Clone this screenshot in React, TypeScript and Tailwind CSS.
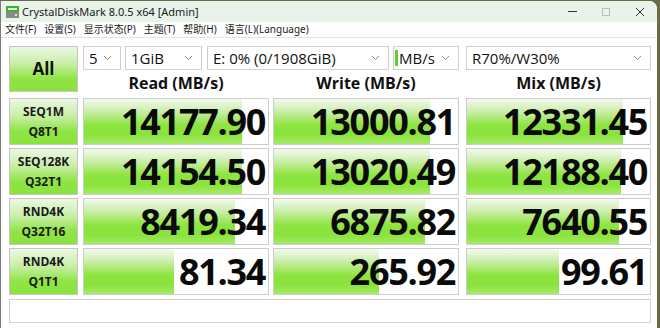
import React from "react";

const barBg =
  "bg-[linear-gradient(to_bottom,#f4f9f0_0%,#c9eea8_28%,#8ee440_58%,#8ae33c_80%,#a6ea68_100%)]";
const btnBg =
  "bg-[linear-gradient(to_bottom,#ecf8e3_0%,#c8eea6_38%,#90e446_72%,#8ae33d_100%)]";

function Chevron() {
  return (
    <svg width="9" height="6" viewBox="0 0 9 6" className="shrink-0">
      <path d="M1 1 L4.5 4.5 L8 1" fill="none" stroke="#8a8a8a" strokeWidth="1" />
    </svg>
  );
}

function Select({ w, text, accent }: { w: string; text: string; accent?: boolean }) {
  return (
    <div
      className={`${w} h-[24px] border border-[#cfcfcf] bg-white flex items-center pl-[4px] pr-[8px] relative`}
    >
      {accent && <div className="absolute left-[1px] top-[3px] w-[3px] h-[16px] bg-[#5fcf2a]" />}
      <span className="flex-1 text-[15px] leading-[20px] text-[#111] whitespace-nowrap pl-[1px]">{text}</span>
      <Chevron />
    </div>
  );
}

function Label({ a, b }: { a: string; b: string }) {
  return (
    <div
      className={`w-[69px] h-[47px] border border-[#c6c6c6] ${btnBg} flex flex-col items-center justify-center text-[12px] font-bold leading-[20px] text-[#1a1a1a]`}
    >
      <span>{a}</span>
      <span>{b}</span>
    </div>
  );
}

function Cell({ v, pct, w }: { v: string; pct: number; w: string }) {
  return (
    <div className={`${w} h-[47px] border border-[#cdcdcd] bg-white relative`}>
      <div className={`absolute left-0 top-0 bottom-0 ${barBg}`} style={{ width: `${pct}%` }} />
      <div className="relative h-full flex items-center justify-end pr-[3px] text-[36px] font-bold tracking-[-1.3px] text-[#0a0a0a] leading-[45px]">
        {v}
      </div>
    </div>
  );
}

const rows = [
  { a: "SEQ1M", b: "Q8T1", v: ["14177.90", "13000.81", "12331.45"], p: [86, 85, 85] },
  { a: "SEQ128K", b: "Q32T1", v: ["14154.50", "13020.49", "12188.40"], p: [86, 85, 84] },
  { a: "RND4K", b: "Q32T16", v: ["8419.34", "6875.82", "7640.55"], p: [82, 82, 83] },
  { a: "RND4K", b: "Q1T1", v: ["81.34", "265.92", "99.61"], p: [49, 57, 50] },
];

export default function App() {
  return (
    <div
      className="w-[660px] h-[328px] bg-[#6b6a48] overflow-hidden"
      style={{ fontFamily: '"Open Sans", "Noto Sans", "Noto Sans CJK SC", sans-serif' }}
    >
      <div className="w-[657px] h-[327px] mt-[1px] bg-white rounded-tr-[8px] overflow-hidden flex flex-col border-l border-[#7b7b7b]">
        {/* title bar */}
        <div className="h-[21px] bg-[#e8f3ea] flex items-center pl-[5px]">
          <svg width="13" height="12" viewBox="0 0 13 12" className="shrink-0">
            <rect x="0" y="0" width="13" height="6" fill="#3fae3a" />
            <rect x="0" y="6" width="13" height="6" fill="#8a8a8a" />
            <rect x="2" y="2" width="9" height="2" fill="#d9f2d0" />
            <rect x="9" y="8" width="2" height="2" fill="#e8e8e8" />
          </svg>
          <span className="ml-[3px] text-[11px] text-[#1a1a1a] leading-none" style={{ fontFamily: '"Noto Sans", sans-serif' }}>
            CrystalDiskMark 8.0.5 x64 [Admin]
          </span>
          <div className="flex-1" />
          <div className="flex items-center h-full">
            <div className="w-[34px] flex justify-center">
              <div className="w-[9px] h-[1px] bg-[#333]" />
            </div>
            <div className="w-[34px] flex justify-center">
              <div className="w-[8px] h-[8px] border border-[#bdbdbd]" />
            </div>
            <div className="w-[34px] flex justify-center">
              <svg width="10" height="10" viewBox="0 0 10 10">
                <path d="M1 1 L9 9 M9 1 L1 9" stroke="#333" strokeWidth="1" />
              </svg>
            </div>
          </div>
        </div>
        {/* menu */}
        <div
          className="h-[14px] flex items-center gap-[8px] pl-[4px] text-[10px] leading-[14px] text-[#1a1a1a] border-b border-[#e3e3e3] pb-[1px] box-content"
          style={{ fontFamily: '"Noto Sans", "Noto Sans CJK SC", sans-serif' }}
        >
          <span>文件(F)</span>
          <span>设置(S)</span>
          <span>显示状态(P)</span>
          <span>主题(T)</span>
          <span>帮助(H)</span>
          <span>语言(L)(Language)</span>
        </div>

        <div className="pl-[8px] pt-[8px] flex flex-col">
          {/* top area */}
          <div className="flex">
            <div
              className={`w-[69px] h-[46px] border border-[#c6c6c6] ${btnBg} flex items-center justify-center text-[17px] font-bold text-[#111]`}
            >
              All
            </div>
            <div className="ml-[5px] flex flex-col">
              <div className="flex">
                <Select w="w-[38px]" text="5" />
                <div className="w-[4px]" />
                <Select w="w-[77px]" text="1GiB" />
                <div className="w-[5px]" />
                <Select w="w-[182px]" text="E: 0% (0/1908GiB)" />
                <div className="w-[4px]" />
                <Select w="w-[66px]" text="MB/s" accent />
              </div>
              <div className="flex h-[25px] items-center text-[16px] font-bold text-[#111]">
                <div className="w-[186px] text-center">Read (MB/s)</div>
                <div className="w-[4px]" />
                <div className="w-[186px] text-center">Write (MB/s)</div>
              </div>
            </div>
            <div className="ml-[7px] flex flex-col">
              <Select w="w-[185px]" text="R70%/W30%" />
              <div className="flex h-[25px] items-center justify-center text-[16px] font-bold text-[#111]">
                Mix (MB/s)
              </div>
            </div>
          </div>

          {/* rows */}
          <div className="mt-[3px] flex flex-col gap-[3px]">
            {rows.map((r, i) => (
              <div key={i} className="flex">
                <Label a={r.a} b={r.b} />
                <div className="w-[5px]" />
                <Cell v={r.v[0]} pct={r.p[0]} w="w-[186px]" />
                <div className="w-[4px]" />
                <Cell v={r.v[1]} pct={r.p[1]} w="w-[186px]" />
                <div className="w-[7px]" />
                <Cell v={r.v[2]} pct={r.p[2]} w="w-[185px]" />
              </div>
            ))}
          </div>

          {/* comment */}
          <div className="mt-[4px] w-[642px] h-[24px] border border-[#d0d0d0] bg-white" />
        </div>
      </div>
    </div>
  );
}
